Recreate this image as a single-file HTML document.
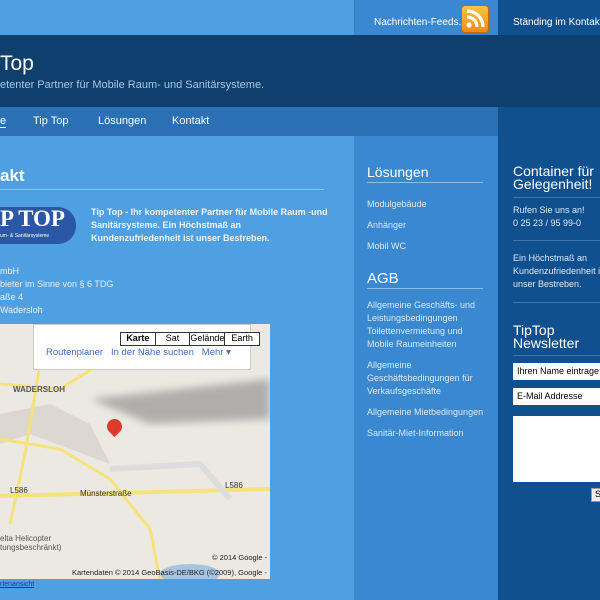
<!DOCTYPE html>
<html><head><meta charset="utf-8"><style>
*{margin:0;padding:0;box-sizing:border-box}
body{width:600px;height:600px;overflow:hidden;background:#4f9fe3;font-family:"Liberation Sans",Arial,sans-serif;position:relative}
.a{position:absolute}
</style></head><body>
<div class="a" style="left:354px;top:0;width:144px;height:600px;background:#3a88cf"></div>
<div class="a" style="left:498px;top:0;width:102px;height:600px;background:#11508f"></div>
<div class="a" style="left:354px;top:0;width:144px;height:35px;background:#3a88d0;border-left:1px solid #3580c6"></div>
<div class="a" style="left:374px;top:17px;color:#fff;font-size:10px">Nachrichten-Feeds...</div>
<div class="a" style="left:461px;top:5px;width:28px;height:28px;border-radius:4px;background:linear-gradient(#ffc340,#f08a10);border:1px solid #c06a10">
<svg width="26" height="26" viewBox="0 0 26 26"><circle cx="7" cy="19" r="2.6" fill="#fff"/><path d="M5 11a10 10 0 0 1 10 10M5 5a16 16 0 0 1 16 16" stroke="#fff" stroke-width="3.2" fill="none"/></svg></div>
<div class="a" style="left:513px;top:17px;color:#fff;font-size:10px;white-space:nowrap">Ständing im Kontakt...</div>
<div class="a" style="left:0;top:35px;width:600px;height:72px;background:#0f3f6d"></div>
<div class="a" style="left:0;top:52px;color:#fff;font-size:21px">Top</div>
<div class="a" style="left:0;top:79px;color:#a9c6e4;font-size:11px">etenter Partner für Mobile Raum- und Sanitärsysteme.</div>
<div class="a" style="left:0;top:107px;width:498px;height:29px;background:#2b70b5"></div>
<div class="a" style="left:498px;top:107px;width:102px;height:29px;background:#11508f"></div>
<div class="a" style="left:0;top:115px;color:#fff;font-size:11px;border-bottom:1px solid #fff">e</div>
<div class="a" style="left:33px;top:115px;color:#fff;font-size:11px">Tip Top</div>
<div class="a" style="left:98px;top:115px;color:#fff;font-size:11px">Lösungen</div>
<div class="a" style="left:172px;top:115px;color:#fff;font-size:11px">Kontakt</div>
<div class="a" style="left:0;top:166px;color:#fff;font-size:17px;font-weight:bold">akt</div>
<div class="a" style="left:0;top:189px;width:324px;height:1px;background:#8cc0ee"></div>
<div class="a" style="left:-30px;top:207px;width:106px;height:37px;background:#2b57a8;border-radius:18px"></div>
<div class="a" style="left:0;top:206px;color:#fff;font:bold 23px 'Liberation Serif',serif">P TOP</div>
<div class="a" style="left:0;top:233px;color:#fff;font-size:5px;white-space:nowrap">um- &amp; Sanitärsysteme</div>
<div class="a" style="left:91px;top:206px;width:240px;color:#eef5fc;font-size:9px;font-weight:bold;line-height:13px">Tip Top - Ihr kompetenter Partner für Mobile Raum -und Sanitärsysteme. Ein Höchstmaß an Kundenzufriedenheit ist unser Bestreben.</div>
<div class="a" style="left:0;top:265px;color:#e6f0fa;font-size:9px;line-height:13px">mbH<br>bieter im Sinne von § 6 TDG<br>aße 4<br>Wadersloh</div>
<div class="a" style="left:0;top:324px;width:270px;height:255px;background:#ece9e2;overflow:hidden">
<svg width="270" height="255" style="position:absolute;left:0;top:0"><defs><filter id="b"><feGaussianBlur stdDeviation="4"/></filter></defs><path d="M90 75 L270 55 L270 95 L150 100 Z" fill="#888" opacity=".6" filter="url(#b)"/><path d="M0 120 L30 110 L110 140 L90 100 L50 80 L0 90Z" fill="#dcd8cf"/><path d="M0 172 L270 165" stroke="#f5e27a" stroke-width="4"/><path d="M0 60 L60 65 L100 40 L140 30" stroke="#f5e27a" stroke-width="3" fill="none"/><path d="M40 40 L25 130 L10 200" stroke="#f5e27a" stroke-width="3" fill="none"/><path d="M0 115 L60 125 L110 155 L150 205 L160 255" stroke="#f5e27a" stroke-width="3" fill="none"/><path d="M110 145 L200 140 L230 175" stroke="#ddd" stroke-width="6" fill="none"/><ellipse cx="190" cy="250" rx="30" ry="10" fill="#a8c4e0"/></svg>
<div class="a" style="left:33px;top:0;width:218px;height:46px;background:#fff;border:1px solid #ccc"></div>
<div class="a" style="left:120px;top:8px;width:140px;height:14px;border:1px solid #333;background:#fff;font-size:9px;display:flex"><span style="flex:1;text-align:center;font-weight:bold;border-right:1px solid #333">Karte</span><span style="flex:1;text-align:center;border-right:1px solid #333">Sat</span><span style="flex:1;text-align:center;border-right:1px solid #333">Gelände</span><span style="flex:1;text-align:center">Earth</span></div>
<div class="a" style="left:46px;top:23px;font-size:9.5px;color:#3a6fc0;white-space:nowrap">Routenplaner &nbsp; In der Nähe suchen &nbsp; Mehr ▾</div>
<div class="a" style="left:13px;top:61px;font-size:8px;color:#555;font-weight:bold">WADERSLOH</div>
<div class="a" style="left:107px;top:95px;width:15px;height:15px;border-radius:50% 50% 50% 0;transform:rotate(-45deg);background:#e03a2f"></div>
<div class="a" style="left:80px;top:165px;font-size:8px;color:#333">Münsterstraße</div>
<div class="a" style="left:10px;top:162px;font-size:8px;color:#333">L586</div>
<div class="a" style="left:225px;top:157px;font-size:8px;color:#333">L586</div>
<div class="a" style="left:0;top:210px;font-size:8px;color:#555">elta Helicopter<br>tungsbeschränkt)</div>
<div class="a" style="left:212px;top:229px;font-size:7.5px;color:#222">© 2014 Google -</div>
<div class="a" style="left:72px;top:244px;font-size:7.5px;color:#222;white-space:nowrap">Kartendaten © 2014 GeoBasis-DE/BKG (©2009), Google -</div>
</div>
<div class="a" style="left:0;top:581px;font-size:7px;color:#1a3aa0;text-decoration:underline">rtenansicht</div>
<div class="a" style="left:367px;top:164px;color:#fff;font-size:14px">Lösungen</div>
<div class="a" style="left:367px;top:182px;width:116px;height:1px;background:#8cbfe8"></div>
<div class="a" style="left:367px;top:194px;color:#dbe9f7;font-size:9px;line-height:21px">Modulgebäude<br>Anhänger<br>Mobil WC</div>
<div class="a" style="left:367px;top:270px;color:#fff;font-size:15px">AGB</div>
<div class="a" style="left:367px;top:288px;width:116px;height:1px;background:#8cbfe8"></div>
<div class="a" style="left:367px;top:299px;width:122px;color:#dbe9f7;font-size:9px;line-height:13px">Allgemeine Geschäfts- und Leistungsbedingungen Toilettenvermietung und Mobile Raumeinheiten<div style="height:8px"></div>Allgemeine Geschäftsbedingungen für Verkaufsgeschäfte<div style="height:8px"></div>Allgemeine Mietbedingungen<div style="height:8px"></div>Sanitär-Miet-Information</div>
<div class="a" style="left:513px;top:165px;color:#fff;font-size:14px;line-height:13px;white-space:nowrap">Container für<br>Gelegenheit!</div>
<div class="a" style="left:513px;top:197px;width:87px;height:1px;background:#3d75ad"></div>
<div class="a" style="left:513px;top:204px;color:#dbe9f7;font-size:9px;line-height:13px;white-space:nowrap">Rufen Sie uns an!<br>0 25 23 / 95 99-0</div>
<div class="a" style="left:513px;top:240px;width:87px;height:1px;background:#3d75ad"></div>
<div class="a" style="left:513px;top:252px;color:#dbe9f7;font-size:9px;line-height:13px;white-space:nowrap">Ein Höchstmaß an<br>Kundenzufriedenheit i<br>unser Bestreben.</div>
<div class="a" style="left:513px;top:302px;width:87px;height:1px;background:#3d75ad"></div>
<div class="a" style="left:513px;top:324px;color:#fff;font-size:14px;line-height:13px">TipTop<br>Newsletter</div>
<div class="a" style="left:513px;top:355px;width:87px;height:1px;background:#3d75ad"></div>
<div class="a" style="left:513px;top:363px;width:90px;height:17px;background:#fff;font-size:9px;padding:3px 4px;white-space:nowrap">Ihren Name eintrage</div>
<div class="a" style="left:513px;top:388px;width:90px;height:17px;background:#fff;font-size:9px;padding:3px 4px">E-Mail Addresse</div>
<div class="a" style="left:513px;top:416px;width:90px;height:66px;background:#fff"></div>
<div class="a" style="left:591px;top:488px;width:12px;height:14px;background:#eee;border:1px solid #999;font-size:9px;padding-left:3px">S</div>
</body></html>
